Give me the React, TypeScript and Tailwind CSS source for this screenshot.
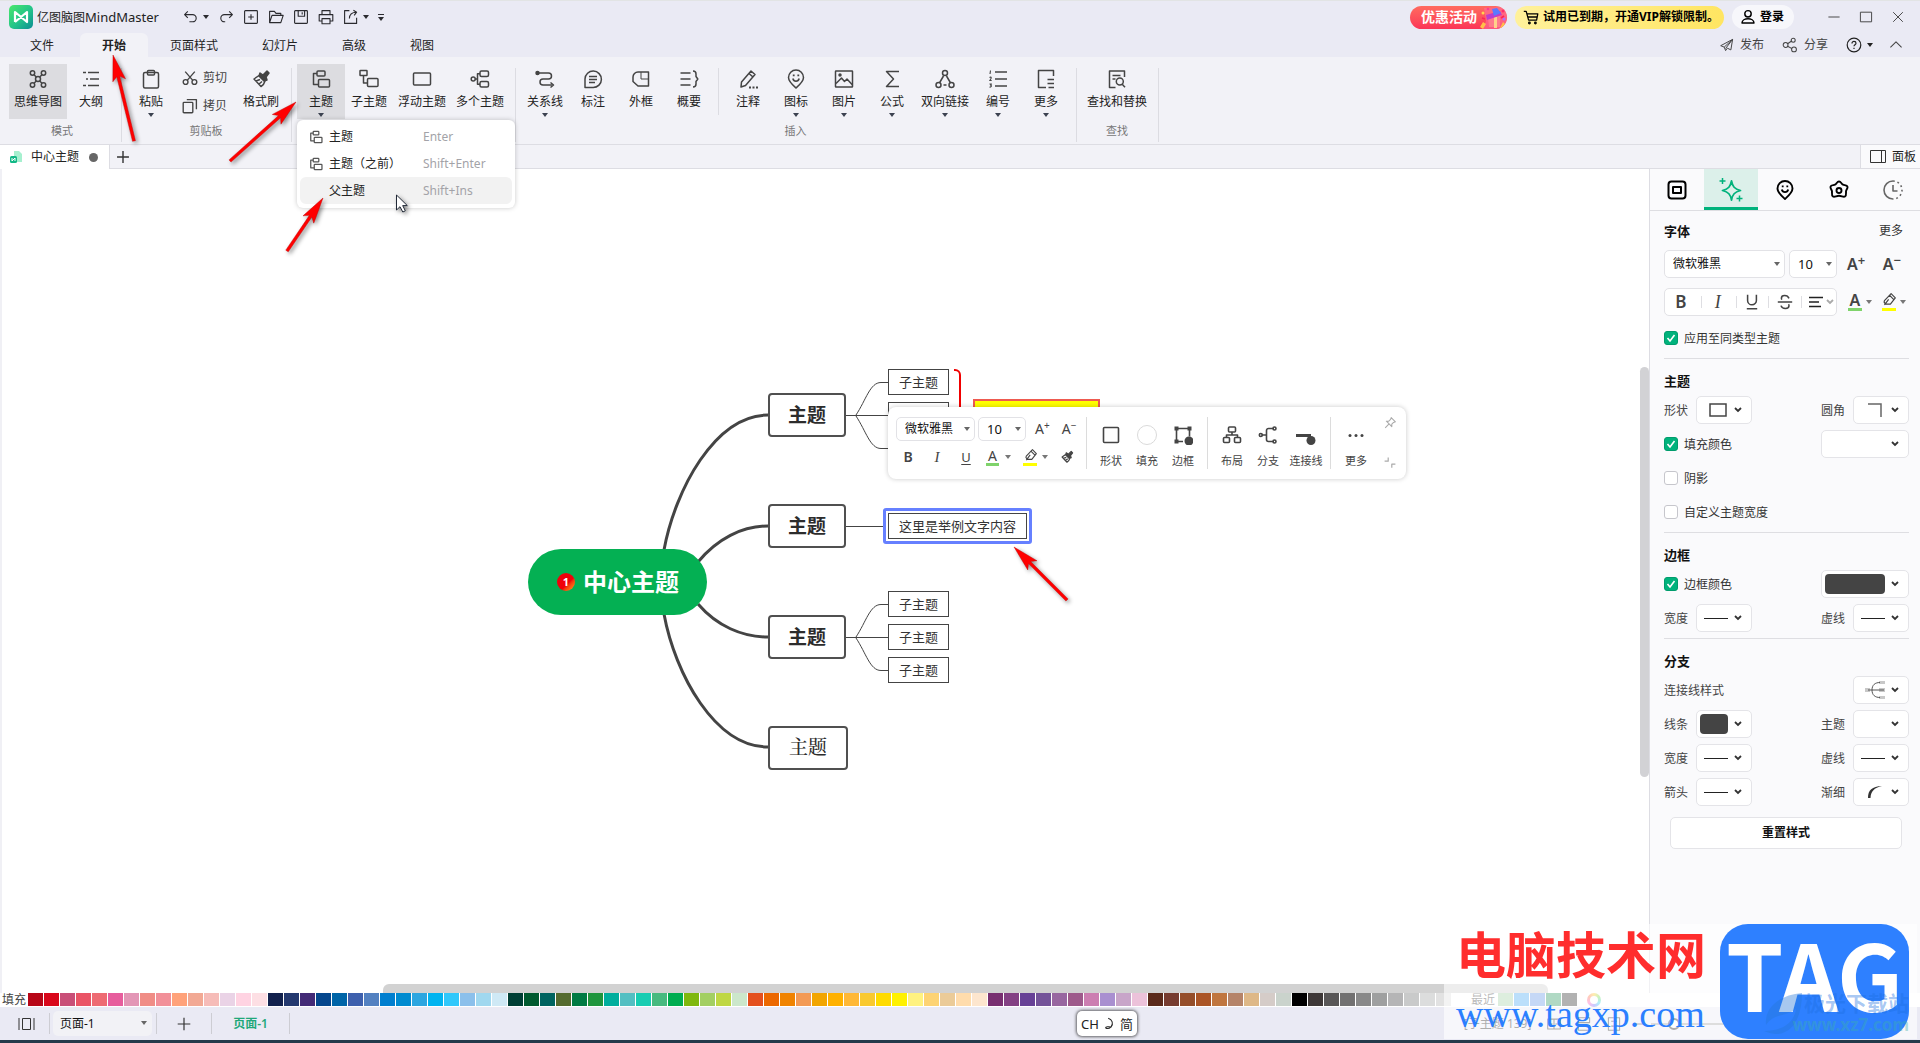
import React, { useState } from "react";
import type { ReactNode } from "react";

const SANS = "font-['Noto_Sans','Noto_Sans_CJK_SC',sans-serif]";

function Icon({ children, size = 20, width = 1.5, className = "" }: { children: ReactNode; size?: number; width?: number; className?: string }) {
  return (
    <svg
      width={size}
      height={size}
      viewBox="0 0 20 20"
      fill="none"
      stroke="currentColor"
      strokeWidth={width}
      strokeLinejoin="round"
      className={"shrink-0 " + className}
      aria-hidden="true"
    >
      {children}
    </svg>
  );
}

const Caret = ({ className = "" }: { className?: string }) => (
  <svg width="6" height="4" viewBox="0 0 6 4" className={"shrink-0 " + className} aria-hidden="true">
    <path d="M0 0h6L3 4z" fill="currentColor" />
  </svg>
);

const Chevron = ({ className = "" }: { className?: string }) => (
  <svg width="8" height="6" viewBox="0 0 8 6" fill="none" stroke="currentColor" strokeWidth="1.8" className={"shrink-0 " + className} aria-hidden="true">
    <path d="M1 1l3 3 3-3" />
  </svg>
);

/* ---------- icon drawings, all on a 20 × 20 grid ---------- */

const art = {
  mind: (
    <>
      <circle cx="10" cy="10" r="2.5" />
      <circle cx="4.5" cy="4" r="2.2" />
      <circle cx="15.5" cy="4" r="2.2" />
      <circle cx="4.5" cy="16" r="2.2" />
      <circle cx="15.5" cy="16" r="2.2" />
      <path d="M6 5.700l2.300 2.300M14 5.700l-2.300 2.300M6 14.300l2.300-2.300M14 14.300l-2.300-2.300" />
    </>
  ),
  outline: <path d="M2 3.500h3M7 3.500h11M5 10h2M9 10h9M2 16.500h3M7 16.500h11" />,
  paste: (
    <>
      <rect x="2.500" y="3.500" width="15" height="15.500" rx="1.500" />
      <rect x="6.500" y="1.500" width="7" height="4.500" rx="1" />
    </>
  ),
  cut: (
    <>
      <circle cx="4.500" cy="15" r="3" />
      <circle cx="15.500" cy="15" r="3" />
      <path d="M4 2l9.500 11M16 2L6.500 13" />
    </>
  ),
  copy: (
    <>
      <rect x="1.500" y="5.500" width="12" height="13" rx="1" />
      <path d="M6 2h12v12" />
    </>
  ),
  brush: (
    <>
      <path d="M9 4l3 2 4-4 2 2-3 4 1 3-3 1-5-5z" fill="currentColor" />
      <path d="M8 6.500L3 10l7 7.500c2.500-1.500 3.500-3.500 4-5.500M5 12l4-1.500M8 15l3-2.500" />
    </>
  ),
  topic: (
    <>
      <rect x="6" y="2" width="8" height="5" rx="1" />
      <rect x="7.500" y="10.500" width="11" height="7.500" rx="1" />
      <path d="M6 4.500H2.500v11h5" />
    </>
  ),
  subtopic: (
    <>
      <rect x="1" y="1.500" width="7" height="5" rx="0.500" />
      <rect x="8.500" y="9.500" width="10.500" height="8" rx="1" />
      <path d="M4.500 6.500v7.500h4" />
    </>
  ),
  floating: <rect x="1.500" y="4" width="17" height="12" rx="1" />,
  multi: (
    <>
      <circle cx="3.200" cy="10" r="2" />
      <rect x="10" y="2" width="8.500" height="5.500" rx="1.500" />
      <rect x="10" y="12.500" width="8.500" height="5.500" rx="1.500" />
      <path d="M10 4.700H7.500v10.600H10M5.200 10h2.300" />
    </>
  ),
  relation: (
    <>
      <path d="M2 4h11.500a3 3 0 010 6H8a2.500 2.500 0 000 6h9" />
      <circle cx="2.500" cy="4" r="1.500" fill="currentColor" />
      <path d="M15.500 13.500L18.500 16l-3 2.500" />
    </>
  ),
  callout: (
    <>
      <path d="M2 18.500V10a8.200 8.200 0 118.200 8.500z" />
      <path d="M6 7.500h8M6 10.500h8M6 13.500h6" />
    </>
  ),
  frame: (
    <>
      <path d="M7 3h10.500v14H7L2 12.500V8a5 5 0 015-5z" />
      <path d="M10 3v7h7.500" strokeWidth="1" />
    </>
  ),
  summary: <path d="M1.500 4h10M1.500 10h10M1.500 16h10M14 2c2.500 0 3 1 3 3v2.500l1.800 2.500-1.800 2.500V15c0 2-.5 3-3 3" />,
  note: (
    <>
      <path d="M13 2l4 3.500-9.500 11L3 18l.5-5zM11 4.500l4 3.500" />
      <path d="M11 18.500h2M14.500 18.500h2M18 18.500h2" strokeWidth="2" />
    </>
  ),
  mark: (
    <>
      <path d="M10 19c-4-3.500-7.500-6.500-7.500-10.500a7.500 7.500 0 0115 0C17.500 12.500 14 15.500 10 19z" />
      <path d="M6.800 9.500c1 3.500 5.400 3.500 6.400 0" />
      <path d="M7.700 5.500v1.700M12.300 5.500v1.700" strokeWidth="1.800" />
    </>
  ),
  image: (
    <>
      <rect x="1.500" y="2" width="17" height="16" rx="0.500" />
      <circle cx="6" cy="6" r="1" fill="currentColor" />
      <path d="M2 14.500L7.500 9l3 3.500 2.500-2.500 5.500 6" />
    </>
  ),
  sigma: <path d="M17 2.500H4.500l7 7.500-7 7.500H17" />,
  link: (
    <>
      <circle cx="10" cy="4" r="2.500" />
      <circle cx="3.500" cy="16" r="2.500" />
      <circle cx="16.500" cy="16" r="2.500" />
      <path d="M8.500 7l-3.800 6.500M11.500 7l3.800 6.500M8.500 16h3" />
    </>
  ),
  numbers: (
    <>
      <path d="M7 3h12M7 10h12M7 17h12" />
      <path d="M2.500 1.500L2 5M1.500 8.500c2-1.200 2.500.5.200 3h2M1.500 15h2l-1 1.200c1.800 0 .8 2.300-1 1.800" strokeWidth="1.100" />
    </>
  ),
  more: <path d="M17.500 7V1.500h-15v17H10M11.500 10.500h6.500M11.500 14.500h6.500M12.500 18.500h5.500" />,
  find: (
    <>
      <path d="M17.500 8V2h-15v16.500h6M5.500 6.500h8M5.500 10h3" />
      <circle cx="12.800" cy="12.500" r="3.500" />
      <path d="M15.200 15.200l2.800 3" />
    </>
  ),
};

/* ---------- ribbon ---------- */

type RibbonProps = { label: string; icon: ReactNode; caret?: boolean; active?: boolean; children?: ReactNode };

function RibbonButton({ label, icon, caret, active, children }: RibbonProps) {
  return (
    <div className="relative">
      <button
        type="button"
        className={"flex h-[55px] min-w-12 flex-col items-center px-[5px] pt-[5px] text-[#444] " + (active ? "bg-[#dcdce0]" : "hover:bg-[#e6e6ea]")}
      >
        <Icon>{icon}</Icon>
        <span className="mt-[5px] h-4 whitespace-nowrap leading-4 text-[#222]">{label}</span>
        {caret && <Caret className="mt-[3px] text-[#3c4250]" />}
      </button>
      {children}
    </div>
  );
}

function RibbonGroup({ label, children }: { label: string; children: ReactNode }) {
  return (
    <section aria-label={label} className="flex flex-col pt-[7px]">
      <div className="flex">{children}</div>
      <div className="mt-1 h-4 text-center text-[11px] leading-4 text-[#777]">{label}</div>
    </section>
  );
}

const RibbonLine = () => <div className="mr-[5px] ml-1.5 mt-[11px] mb-0.5 w-px bg-[#dcdce2]" />;

function TopicMenu() {
  const items = [
    { name: "主题", key: "Enter", icon: true },
    { name: "主题（之前）", key: "Shift+Enter", icon: true },
    { name: "父主题", key: "Shift+Ins", icon: false, hover: true },
  ];
  return (
    <ul role="menu" className="absolute top-14 left-0 z-20 w-[218px] rounded-md bg-white px-[3px] pt-[3px] pb-1 shadow-[0_0_5px_rgba(0,0,0,0.22)]">
      {items.map((it) => (
        <li key={it.name} role="none">
          <button role="menuitem" type="button" className={"flex h-[27px] w-full items-center gap-1.5 rounded-md pl-[9px] text-left " + (it.hover ? "bg-[#f2f2f2]" : "")}>
            <span className="w-3.5 text-[#555]">{it.icon && <Icon size={14} width={1.8}>{art.topic}</Icon>}</span>
            <span className="w-[88px] whitespace-nowrap text-[#222]">{it.name}</span>
            <span className="text-[#a3a3a8]">{it.key}</span>
          </button>
        </li>
      ))}
    </ul>
  );
}

function Ribbon() {
  return (
    <div className="flex h-[88px] border-b border-[#dddde3] bg-[#f2f2f7] pl-[9px]">
      <RibbonGroup label="模式">
        <RibbonButton label="思维导图" icon={art.mind} active />
        <RibbonButton label="大纲" icon={art.outline} />
      </RibbonGroup>
      <RibbonLine />
      <RibbonGroup label="剪贴板">
        <RibbonButton label="粘贴" icon={art.paste} caret />
        <div className="flex w-[62px] flex-col pl-[7px] text-[#444]">
          <button type="button" className="flex h-7 items-center gap-[5px]">
            <Icon size={16} width={1.7}>{art.cut}</Icon>剪切
          </button>
          <button type="button" className="flex h-[27px] items-center gap-[5px]">
            <Icon size={16} width={1.7}>{art.copy}</Icon>拷贝
          </button>
        </div>
        <RibbonButton label="格式刷" icon={art.brush} />
      </RibbonGroup>
      <RibbonLine />
      <RibbonGroup label="主题">
        <RibbonButton label="主题" icon={art.topic} caret active>
          <TopicMenu />
        </RibbonButton>
        <RibbonButton label="子主题" icon={art.subtopic} />
        <RibbonButton label="浮动主题" icon={art.floating} />
        <RibbonButton label="多个主题" icon={art.multi} />
      </RibbonGroup>
      <RibbonLine />
      <RibbonGroup label="插入">
        <RibbonButton label="关系线" icon={art.relation} caret />
        <RibbonButton label="标注" icon={art.callout} />
        <RibbonButton label="外框" icon={art.frame} />
        <RibbonButton label="概要" icon={art.summary} />
        <div className="mx-[5px] my-1 w-px bg-[#dcdce2]" />
        <RibbonButton label="注释" icon={art.note} />
        <RibbonButton label="图标" icon={art.mark} caret />
        <RibbonButton label="图片" icon={art.image} caret />
        <RibbonButton label="公式" icon={art.sigma} caret />
        <RibbonButton label="双向链接" icon={art.link} caret />
        <RibbonButton label="编号" icon={art.numbers} caret />
        <RibbonButton label="更多" icon={art.more} caret />
      </RibbonGroup>
      <RibbonLine />
      <RibbonGroup label="查找">
        <RibbonButton label="查找和替换" icon={art.find} />
      </RibbonGroup>
      <RibbonLine />
    </div>
  );
}

/* ---------- title bar and menu ---------- */

function Logo() {
  return (
    <svg width="24" height="24" viewBox="0 0 24 24" aria-hidden="true">
      <defs>
        <linearGradient id="logo" x1="0" y1="0" x2="1" y2="1">
          <stop offset="0" stopColor="#4be86a" />
          <stop offset="0.55" stopColor="#22c38a" />
          <stop offset="1" stopColor="#0b8d94" />
        </linearGradient>
      </defs>
      <rect width="24" height="24" rx="5" fill="url(#logo)" />
      <path d="M6 17V7l12 10V7L6 17" fill="none" stroke="#fff" strokeWidth="2.200" strokeLinejoin="round" />
    </svg>
  );
}

function QuickBtn({ label, children, caret }: { label: string; children: ReactNode; caret?: boolean }) {
  return (
    <button type="button" aria-label={label} className="flex items-center gap-1">
      <Icon size={16} width={1.4}>{children}</Icon>
      {caret && <Caret />}
    </button>
  );
}

function Gift() {
  return (
    <svg width="27" height="23" viewBox="0 0 27 23" aria-hidden="true">
      <path d="M4 2L22 1c3 1 5 5 5 10l-2 12H3l3-8z" fill="#ff6f9a" opacity="0.600" />
      <path d="M8 11l12-1v11H9z" fill="#ff7a8c" />
      <path d="M14 11h3v11h-3z" fill="#ffd08a" />
      <path d="M6 9l14-4 2 4-15 5z" fill="#c13cc9" />
      <path d="M12 3l5-1 4 5-7 3z" fill="#5b79ff" />
      <path d="M0 21l3-5 3 2-3 5zM20 22l3-6 3 3-2 4z" fill="#ffc04a" />
      <circle cx="3" cy="7" r="1.500" fill="#ffd34f" />
      <circle cx="8" cy="3" r="1.300" fill="#ff3d8f" />
      <circle cx="23" cy="5" r="1.500" fill="#ff2d6f" />
      <circle cx="24" cy="13" r="1.500" fill="#b26bff" />
      <path d="M2 12l3 1M21 12l3-2" stroke="#ff2257" strokeWidth="1.600" />
    </svg>
  );
}

function TitleBar() {
  return (
    <header className="flex h-[33px] items-center border-t border-[#e2e4e4] pl-[9px] text-[#2b2b2f]">
      <Logo />
      <h1 className="ml-1 w-[146px] text-[12px] text-[#222]">亿图脑图<span className="text-[13px]">MindMaster</span></h1>
      <nav aria-label="快速访问" className="flex items-center gap-[9px]">
        <QuickBtn label="撤销" caret><path d="M6 3L2 7l4 4M2 7h10a4.500 4.500 0 010 9H8" /></QuickBtn>
        <QuickBtn label="重做"><path d="M14 3l4 4-4 4M18 7H8a4.500 4.500 0 000 9h1" /></QuickBtn>
        <QuickBtn label="新建"><rect x="2" y="2" width="16" height="16" rx="1" /><path d="M10 6.500v7M6.500 10h7" /></QuickBtn>
        <QuickBtn label="打开"><path d="M2 17V3h6l2 2.500h6V8M2 17l3-9h14l-3 9z" /></QuickBtn>
        <QuickBtn label="保存"><rect x="2" y="2" width="16" height="16" rx="1" /><path d="M6.500 2v7h8V2M11.500 4v3" /></QuickBtn>
        <QuickBtn label="打印"><path d="M5 7V2h10v5M5 15H1.500V7h17v8H15" /><rect x="5" y="12" width="10" height="6.500" /></QuickBtn>
        <QuickBtn label="导出" caret><path d="M8 2H2v16h15v-7M8 12c0-5 3-8 9-8M13 1.500l4 2.500-3 4" /></QuickBtn>
        <button type="button" aria-label="自定义" className="flex flex-col items-center gap-0.5">
          <span className="h-px w-1.5 bg-[#2b2b2f]" />
          <Caret />
        </button>
      </nav>
      <div className="ml-auto flex items-center text-[12px] font-bold">
        <button type="button" className="flex h-[23px] w-[97px] items-center justify-between overflow-hidden rounded-full bg-linear-to-b from-[#ff6a5f] to-[#fb3357] pl-[11px] text-[14px] text-white">
          <span className="whitespace-nowrap">优惠活动</span>
          <Gift />
        </button>
        <button type="button" className="ml-2 flex h-[23px] w-[209px] items-center gap-1 rounded-full bg-linear-to-r from-[#fff19b] to-[#ffe561] pl-2 text-black">
          <Icon size={16} width={1.6}>
            <path d="M1 3h3l3 11h10l1.500-8H5M6 10h12" />
            <circle cx="8" cy="17.500" r="1" />
            <circle cx="15.500" cy="17.500" r="1" />
          </Icon>
          <span className="whitespace-nowrap">试用已到期，开通VIP解锁限制。</span>
        </button>
        <button type="button" className="ml-2 flex h-6 w-[62px] items-center gap-1 rounded-full bg-[#f7f7fb] pl-2 text-black">
          <Icon size={16} width={1.8}><circle cx="10" cy="6" r="4" /><path d="M2.500 17.500c0-7 15-7 15 0z" /></Icon>
          登录
        </button>
        <div className="ml-8 mr-3.5 flex items-center gap-4 text-[#444]">
          <button type="button" aria-label="最小化"><Icon size={16} width={1.200}><path d="M3 10h14" /></Icon></button>
          <button type="button" aria-label="最大化"><Icon size={16} width={1.200}><rect x="3" y="4" width="14" height="12" /></Icon></button>
          <button type="button" aria-label="关闭"><Icon size={16} width={1.200}><path d="M4 4l12 12M16 4L4 16" /></Icon></button>
        </div>
      </div>
    </header>
  );
}

function MenuBar() {
  const tabs = ["文件", "开始", "页面样式", "幻灯片", "高级", "视图"];
  return (
    <div className="flex h-6 items-center pl-2">
      <nav aria-label="菜单" className="flex h-6">
        {tabs.map((t) => (
          <button
            key={t}
            type="button"
            className={"h-6 px-[22px] pt-0.5 text-[#222] " + (t === "开始" ? "ml-1 rounded-t-md bg-[#f2f2f7] font-bold" : "")}
          >
            {t}
          </button>
        ))}
      </nav>
      <div className="mr-4 ml-auto flex items-center text-[#444]">
        <button type="button" className="flex items-center gap-1.5">
          <Icon size={14} width={1.400}><path d="M18 2L1 11l5 2 2 5 2.500-3.500 5 2.500zM6 13L18 2 8 15" /></Icon>发布
        </button>
        <button type="button" className="ml-[18px] flex items-center gap-1.5">
          <Icon size={16} width={1.300}>
            <circle cx="4.500" cy="10" r="3" /><circle cx="14" cy="4" r="2.500" /><circle cx="15" cy="15.500" r="3" /><path d="M7 8.500L12 5M7 11.500l5.500 3" />
          </Icon>分享
        </button>
        <button type="button" aria-label="帮助" className="ml-[18px] flex items-center gap-[5px] text-[#222]">
          <Icon size={16} width={1.500}>
            <circle cx="10" cy="10" r="8.500" /><path d="M7.500 8c0-3.500 5-3 5-.3 0 2-2.500 2-2.500 4M10 13.500v1.500" />
          </Icon>
          <Caret />
        </button>
        <button type="button" aria-label="收起" className="ml-[15px]"><Icon size={16} width={1.300}><path d="M3 13l7-7 7 7" /></Icon></button>
      </div>
    </div>
  );
}

function DocTabs() {
  return (
    <div className="flex h-6 items-stretch border-b border-[#dddde3] bg-[#f2f2f7]">
      <button type="button" className="-mb-px flex h-6 w-[110px] items-center border-r border-[#dddde3] bg-white pl-2.5 text-[#222]">
        <svg width="12" height="14" viewBox="0 0 12 14" aria-hidden="true">
          <path d="M4 1h5l3 3v8H4z" fill="#a6f0cf" />
          <rect x="0" y="6" width="7" height="7" rx="1.500" fill="#12b886" />
          <path d="M2 8v3l3-3v3" stroke="#fff" fill="none" />
        </svg>
        <span className="ml-[9px]">中心主题</span>
        <span className="ml-2.5 size-[9px] rounded-full bg-[#666]" />
      </button>
      <button type="button" aria-label="新建文档" className="ml-1.5 text-[#333]"><Icon size={14} width={2}><path d="M10 1.500v17M1.500 10h17" /></Icon></button>
      <button type="button" className="ml-auto flex w-[60px] items-center gap-1.5 border-l border-[#dddde3] bg-[#fafafc] pl-[9px] whitespace-nowrap text-[#222]">
        <svg width="16" height="13" viewBox="0 0 16 13" fill="none" stroke="#333" aria-hidden="true"><path d="M.5.5h15v12H.5zM11.500.5v12" /></svg>
        面板
      </button>
    </div>
  );
}

/* ---------- mind map canvas ---------- */

const subBox = "absolute left-[888px] flex h-[26px] w-[61px] items-center justify-center border border-[#444] bg-white text-[13px] text-[#333]";
const mainBox = "absolute left-[768px] flex h-11 items-center justify-center rounded-[4px] border-2 border-[#505050] bg-white text-[19px] text-[#2c2c2c]";

function Connectors() {
  return (
    <svg className="absolute inset-0 h-full w-full" fill="none" stroke="#444" aria-hidden="true">
      <g strokeWidth="3">
        <path d="M664 381C675 321 715 246 768 246" />
        <path d="M698 393C717 370 742 357 768 357" />
        <path d="M698 435C717 457 742 468 768 468" />
        <path d="M664 445C675 505 715 578 768 578" />
      </g>
      <g strokeWidth="1">
        <path d="M846 246.500h42M856 246C866 231 870 213.500 881 213.500h7M856 247C866 262 870 279.500 881 279.500h7" />
        <path d="M846 357.500h42" />
        <path d="M846 468.500h42M856 468C866 453 870 435.500 881 435.500h7M856 469C866 484 870 501.500 881 501.500h7" />
      </g>
    </svg>
  );
}

function MiniTool({ label, wide, children }: { label: string; wide?: boolean; children: ReactNode }) {
  return (
    <button type="button" className={"flex flex-col items-center text-[11px] text-[#444] " + (wide ? "w-10" : "w-9")}>
      <Icon className="mt-[18px]" width={1.600}>{children}</Icon>
      <span className="mt-2 h-4 leading-4 whitespace-nowrap">{label}</span>
    </button>
  );
}

const MiniLine = () => <div className="my-2.5 w-px bg-[#dcdcdc]" />;

function Highlighter({ size = 14 }: { size?: number }) {
  return (
    <Icon size={size} width={1.700}><path d="M13 1l6 6-7 9H5l-2-3 .5-2zM11 3.500l5.500 5.500M9.500 9l-6 8" /></Icon>
  );
}

function FontSelect({ small }: { small?: boolean }) {
  return (
    <div className={"relative " + (small ? "w-[79px]" : "w-[121px]")}>
      <select aria-label="字体" className={"w-full appearance-none rounded-[5px] border border-[#e2e2e6] bg-white pl-2 text-[12px] text-[#111] " + (small ? "h-6" : "h-7")}>
        <option>微软雅黑</option>
      </select>
      <Caret className="pointer-events-none absolute top-1/2 right-[5px] -mt-0.5 text-[#666]" />
    </div>
  );
}

function SizeSelect({ small }: { small?: boolean }) {
  return (
    <div className="relative w-12">
      <select aria-label="字号" className={"w-full appearance-none rounded-[5px] border border-[#e2e2e6] bg-white pl-2 text-[13px] text-[#111] " + (small ? "h-6" : "h-7")}>
        <option>10</option>
      </select>
      <Caret className="pointer-events-none absolute top-1/2 right-[5px] -mt-0.5 text-[#666]" />
    </div>
  );
}

function FontStep({ label, sign, small }: { label: string; sign: string; small?: boolean }) {
  return (
    <button type="button" aria-label={label} className={"flex items-start text-[#444] " + (small ? "text-[14px] leading-5" : "text-[16px] leading-5 font-semibold")}>
      <span>A</span>
      <span className={small ? "text-[10px] leading-3" : "text-[13px] leading-3"}>{sign}</span>
    </button>
  );
}

function FloatingToolbar() {
  return (
    <div role="toolbar" aria-label="浮动工具栏" className="absolute top-[238px] left-[888px] flex h-[72px] w-[518px] rounded-lg bg-white pl-2 text-[#444] shadow-[0_0_5px_rgba(0,0,0,0.22)]">
      <div className="flex w-[190px] flex-col pt-2.5">
        <div className="flex items-center gap-[3px]">
          <FontSelect small />
          <SizeSelect small />
          <div className="ml-1.5 flex gap-3">
            <FontStep label="增大字号" sign="+" small />
            <FontStep label="减小字号" sign="−" small />
          </div>
        </div>
        <div className="mt-1 flex h-6 items-center">
          <button type="button" aria-label="加粗" className="w-6 text-[14px] font-semibold">B</button>
          <button type="button" aria-label="斜体" className="ml-[5px] w-6 font-['Liberation_Serif',serif] text-[15px] italic">I</button>
          <button type="button" aria-label="下划线" className="ml-[5px] w-6 text-[13px] underline underline-offset-2">U</button>
          <button type="button" aria-label="字体颜色" className="ml-2 flex items-center gap-1.5">
            <span className="h-[17px] w-[13px] border-b-[3px] border-[#7fd36b] text-[14px] leading-[14px]">A</span><Caret className="text-[#777]" />
          </button>
          <button type="button" aria-label="高亮" className="ml-3 flex items-center gap-[5px]">
            <span className="flex h-[17px] w-[14px] flex-col items-center border-b-[3px] border-[#ffff00]"><Highlighter size={13} /></span><Caret className="text-[#777]" />
          </button>
          <button type="button" aria-label="格式刷" className="ml-3"><Icon size={14} width={1.700}>{art.brush}</Icon></button>
        </div>
      </div>
      <MiniLine />
      <div className="flex pr-1.5 pl-1.5">
        <MiniTool label="形状"><rect x="2.500" y="2.500" width="15" height="15" rx="1" /></MiniTool>
        <MiniTool label="填充"><circle cx="10" cy="10" r="9.500" stroke="#dadada" strokeWidth="1" /></MiniTool>
        <MiniTool label="边框">
          <path d="M3.500 3.500h13v8M3.500 3.500v13H10" />
          <g fill="currentColor" stroke="none"><path d="M1.500 1.500h4v4h-4zM14.500 1.500h4v4h-4zM1.500 14.500h4v4h-4z" /><circle cx="16" cy="16" r="4.500" /></g>
        </MiniTool>
      </div>
      <MiniLine />
      <div className="flex pr-1 pl-1.5">
        <MiniTool label="布局">
          <rect x="6.500" y="2" width="7" height="5" rx="1" /><rect x="1.500" y="12.500" width="6" height="5" rx="1" /><rect x="12.500" y="12.500" width="6" height="5" rx="1" /><path d="M10 7v3M4.500 12.500V10h11v2.500" />
        </MiniTool>
        <MiniTool label="分支">
          <path d="M3.500 10h5M16 3.500h-5.500a2 2 0 00-2 2v9a2 2 0 002 2H16" /><circle cx="2.800" cy="10" r="1.500" /><circle cx="16.500" cy="3.500" r="1.500" /><circle cx="16.500" cy="16.500" r="1.500" />
        </MiniTool>
        <MiniTool label="连接线" wide>
          <path d="M0 10.500h15" strokeWidth="3" /><circle cx="15" cy="15.500" r="4.500" fill="currentColor" stroke="none" />
        </MiniTool>
      </div>
      <MiniLine />
      <div className="pl-[7px]">
        <MiniTool label="更多"><g fill="currentColor" stroke="none"><circle cx="4" cy="10.500" r="1.500" /><circle cx="10" cy="10.500" r="1.500" /><circle cx="16" cy="10.500" r="1.500" /></g></MiniTool>
      </div>
      <div className="mr-2.5 ml-auto flex flex-col justify-between py-2.5 text-[#aaa]">
        <button type="button" aria-label="固定"><Icon size={12} width={1.800}><path d="M12 1l7 7-3 1-3 3v4L4 7h4l3-3zM8 12l-6 6" /></Icon></button>
        <button type="button" aria-label="收缩"><Icon size={12} width={2}><path d="M1 7h6V1M19 12h-6v6" /></Icon></button>
      </div>
    </div>
  );
}

function Canvas() {
  return (
    <main className="relative min-w-0 flex-1 overflow-hidden border-l-2 border-[#f0f0f5] bg-white">
      <div className="absolute inset-y-0 right-0 -left-0.5">
        <Connectors />
        <div className="absolute top-[380px] left-[528px] flex h-[66px] w-[179px] items-center rounded-full bg-[#04b053] pl-[29px] text-white">
          <span className="flex size-[18px] items-center justify-center rounded-full bg-linear-to-br from-[#f0000b] from-60% to-[#ff9a1f] text-[11px] font-bold">1</span>
          <span className="ml-2 text-[24px] font-bold whitespace-nowrap">中心主题</span>
        </div>
        <div className={mainBox + " top-[224px] w-[78px] font-bold"}>主题</div>
        <div className={mainBox + " top-[335px] w-[78px] font-bold"}>主题</div>
        <div className={mainBox + " top-[446px] w-[78px] font-bold"}>主题</div>
        <div className={mainBox + " top-[557px] w-20 font-['Liberation_Serif','Noto_Serif_CJK_SC','Noto_Sans_CJK_SC',serif] font-medium"}>主题</div>
        <div className={subBox + " top-[200px]"}>子主题</div>
        <div className={subBox + " top-[233px]"}>子主题</div>
        <div className={subBox + " top-[422px]"}>子主题</div>
        <div className={subBox + " top-[455px]"}>子主题</div>
        <div className={subBox + " top-[488px]"}>子主题</div>
        <div className="absolute top-[339px] left-[883px] rounded-[3px] border-3 border-[#6680ff] bg-white p-0.5">
          <div className="flex h-[26px] w-[139px] items-center justify-center border border-[#444] text-[13px] whitespace-nowrap text-[#333]">这里是举例文字内容</div>
        </div>
        <div className="absolute top-[200px] left-[954px] h-16 w-[7px] rounded-r-md border-2 border-l-0 border-[#f00000]" />
        <div className="absolute top-[230px] left-[973px] h-8 w-[127px] border-2 border-[#ee5a50] bg-[#ffff00]" />
        <FloatingToolbar />
      </div>
      <div className="absolute top-[198px] right-0 h-[410px] w-[9px] rounded-full bg-[#d2d2d5]" />
      <div className="absolute right-[101px] bottom-0 left-[381px] h-[9px] rounded-t-md bg-[#d2d2d2]" />
    </main>
  );
}

/* ---------- style panel ---------- */

const Label = ({ children }: { children: ReactNode }) => <span className="pt-px whitespace-nowrap text-[#444]">{children}</span>;

function Drop({ label, wide, children }: { label: string; wide?: boolean; children?: ReactNode }) {
  return (
    <button
      type="button"
      aria-label={label}
      aria-haspopup="listbox"
      className={"flex h-7 items-center justify-between rounded-[5px] border border-[#e4e4e8] bg-white pr-[9px] pl-[3px] text-[#333] " + (wide ? "w-[88px]" : "w-14")}
    >
      <span className={"flex h-5 items-center justify-center " + (wide ? "w-[60px]" : "w-7")}>{children}</span>
      <Chevron />
    </button>
  );
}

const Line = () => <span className="ml-1 h-px w-6 shrink-0 bg-[#222]" />;

function Check({ label, defaultChecked }: { label: string; defaultChecked?: boolean }) {
  const [on, setOn] = useState(!!defaultChecked);
  return (
    <label className="relative flex items-center gap-1.5 text-[#333]">
      <input
        type="checkbox"
        checked={on}
        onChange={(e) => setOn(e.target.checked)}
        className="size-3.5 appearance-none rounded-[3px] border border-[#c6c6cc] bg-white checked:border-[#009c6c] checked:bg-[#00b27c]"
      />
      {on && (
        <svg className="pointer-events-none absolute left-0" width="14" height="14" viewBox="0 0 14 14" fill="none" stroke="#fff" strokeWidth="1.600" aria-hidden="true">
          <path d="M3.500 7l2.500 3 4.500-6" />
        </svg>
      )}
      <span className="pt-px">{label}</span>
    </label>
  );
}

function Section({ title, action, first, last, children }: { title: string; action?: ReactNode; first?: boolean; last?: boolean; children: ReactNode }) {
  return (
    <section className={(first ? "pt-1.5 " : "pt-[9px] ") + (last ? "" : "border-b border-[#dedee2] pb-[3px]")}>
      <div className={"flex items-center justify-between pr-1.5 " + (first ? "h-7" : "h-[25px]")}>
        <h2 className="text-[13px] font-bold text-[#111]">{title}</h2>
        {action}
      </div>
      {children}
    </section>
  );
}

const Row = ({ children }: { children: ReactNode }) => <div className="flex h-[34px] items-center justify-between">{children}</div>;

function Pair({ label, children, wide }: { label: string; children?: ReactNode; wide?: boolean }) {
  return (
    <div className="flex items-center gap-2">
      <Label>{label}</Label>
      <Drop label={label} wide={wide}>{children}</Drop>
    </div>
  );
}

function PanelTabs() {
  const tabs: { name: string; icon: ReactNode }[] = [
    { name: "页面", icon: <Icon width={2}><rect x="1.500" y="1.500" width="17" height="17" rx="3" /><rect x="6" y="7" width="8" height="6" /></Icon> },
    {
      name: "样式",
      icon: (
        <svg width="24" height="24" viewBox="0 0 24 24" fill="none" stroke="currentColor" strokeWidth="1.800" strokeLinejoin="round" aria-hidden="true">
          <path d="M12.500 3c1 5.500 3 8 9 9.500-6 1.500-8 4-9 9.500-1-5.500-3-8-9-9.500 6-1.500 8-4 9-9.500z" />
          <path d="M3.500 0v6M.5 3h6M20.500 17.500v6M17.500 20.500h6" strokeWidth="1.500" />
        </svg>
      ),
    },
    { name: "图标", icon: <Icon width={1.900}>{art.mark}</Icon> },
    {
      name: "花样",
      icon: (
        <Icon width={1.900}>
          <path d="M10 1.500c2 0 2.500 2.500 4 3.200s4 .3 4.500 2-1.500 3-1.500 4.800.5 4-1 5-3.500-.8-6-.8-4.500 1.800-6 .8-1-3.500-1-5S1 8.500 1.500 6.700s3-1.300 4.500-2S8 1.500 10 1.500z" />
          <circle cx="10" cy="10.500" r="2.500" />
        </Icon>
      ),
    },
    {
      name: "历史",
      icon: (
        <Icon width={1.600} className="text-[#666]">
          <path d="M10 1a9 9 0 000 18" /><path d="M10 1a9 9 0 010 18" strokeDasharray="1.800 2.800" /><path d="M10 5v6h4.500" />
        </Icon>
      ),
    },
  ];
  return (
    <div role="tablist" className="flex h-[42px] border-b border-[#dedee2]">
      {tabs.map((t) => (
        <button
          key={t.name}
          type="button"
          role="tab"
          aria-label={t.name}
          aria-selected={t.name === "样式"}
          className={"flex flex-1 items-center justify-center border-b-3 pt-[3px] " + (t.name === "样式" ? "border-[#00b27c] bg-[#dcf0ea] text-[#00b27c]" : "border-transparent text-black")}
        >
          {t.icon}
        </button>
      ))}
    </div>
  );
}

const Sep = () => <span className="h-3 w-px bg-[#dedee2]" />;

function StylePanel() {
  return (
    <aside aria-label="样式面板" className="w-[271px] shrink-0 border-l border-[#dddde3] bg-[#fafafc]">
      <PanelTabs />
      <div className="pr-[11px] pl-3.5">
        <Section title="字体" first action={<button type="button" className="text-[#333]">更多</button>}>
          <div className="flex h-[38px] items-center gap-1">
            <FontSelect />
            <SizeSelect />
            <div className="flex flex-1 justify-between pr-2 pl-1.5">
              <FontStep label="增大字号" sign="+" />
              <FontStep label="减小字号" sign="−" />
            </div>
          </div>
          <div className="flex h-[38px] items-center text-[#444]">
            <div className="flex h-7 w-[173px] items-center rounded-[5px] border border-[#e2e2e6] bg-white">
              <button type="button" aria-label="加粗" className="flex-1 pr-1 text-[17px] font-semibold">B</button><Sep />
              <button type="button" aria-label="斜体" className="flex-1 pr-0.5 font-['Liberation_Serif',serif] text-[18px] italic">I</button><Sep />
              <button type="button" aria-label="下划线" className="flex flex-1 justify-center"><Icon size={16} width={1.900}><path d="M4.500 1v7a5.500 5.500 0 0011 0V1M3.500 18.500h13" /></Icon></button><Sep />
              <button type="button" aria-label="删除线" className="flex flex-1 justify-center"><Icon size={16} width={1.900}><path d="M15 5.500C13 .5 5.500 1 5.500 5.200c0 .8.2 1.300.6 1.800M1 10h18M5 14.500c1.500 5 10 4.500 10 .3 0-.8-.2-1.400-.6-1.900" /></Icon></button><Sep />
              <button type="button" aria-label="对齐" className="flex flex-1 items-center justify-end gap-0.5 pr-0.5">
                <svg width="15" height="12" viewBox="0 0 15 12" stroke="#222" strokeWidth="1.500" aria-hidden="true"><path d="M0 1.500h14M0 6h10M0 10.500h12" /></svg>
                <Chevron className="text-[#aaa]" />
              </button>
            </div>
            <button type="button" aria-label="字体颜色" className="ml-[11px] flex items-center gap-1">
              <span className="h-[18px] w-3.5 border-b-[3px] border-[#7fd36b] text-[16px] leading-[15px] font-semibold">A</span><Caret className="text-[#777]" />
            </button>
            <button type="button" aria-label="高亮" className="ml-2.5 flex items-center gap-1">
              <span className="flex h-[18px] w-3.5 flex-col items-center border-b-[3px] border-[#ffff00]"><Highlighter /></span><Caret className="text-[#777]" />
            </button>
          </div>
          <Row><Check label="应用至同类型主题" defaultChecked /></Row>
        </Section>
        <Section title="主题">
          <Row>
            <Pair label="形状"><svg width="18" height="14" viewBox="0 0 18 14" className="ml-2 shrink-0" aria-hidden="true"><rect x="1" y="1" width="16" height="12" fill="none" stroke="#444" strokeWidth="1.500" /></svg></Pair>
            <Pair label="圆角"><svg width="14" height="14" viewBox="0 0 14 14" className="ml-2 shrink-0" aria-hidden="true"><path d="M0 1h13v13" fill="none" stroke="#666" strokeWidth="1.500" /></svg></Pair>
          </Row>
          <Row><Check label="填充颜色" defaultChecked /><Drop label="填充颜色" wide /></Row>
          <Row><Check label="阴影" /></Row>
          <Row><Check label="自定义主题宽度" /></Row>
        </Section>
        <Section title="边框">
          <Row><Check label="边框颜色" defaultChecked /><Drop label="边框颜色" wide><span className="h-5 w-full rounded bg-[#444]" /></Drop></Row>
          <Row><Pair label="宽度"><Line /></Pair><Pair label="虚线"><Line /></Pair></Row>
        </Section>
        <Section title="分支" last>
          <Row>
            <Label>连接线样式</Label>
            <Drop label="连接线样式">
              <svg width="20" height="18" viewBox="0 0 20 18" className="ml-2 shrink-0" fill="none" aria-hidden="true">
                <path d="M0 7h5v4H0zM14 0h6v3h-6zM14 7h6v4h-6zM14 15h6v3h-6z" fill="#c8c8c8" />
                <path d="M3 9h16M7 9c0-5 3-7.500 8-7.500M7 9c0 5 3 7.500 8 7.500" stroke="#555" />
              </svg>
            </Drop>
          </Row>
          <Row><Pair label="线条"><span className="h-5 w-7 rounded bg-[#444]" /></Pair><Pair label="主题" /></Row>
          <Row><Pair label="宽度"><Line /></Pair><Pair label="虚线"><Line /></Pair></Row>
          <Row>
            <Pair label="箭头"><Line /></Pair>
            <Pair label="渐细"><svg width="14" height="13" viewBox="0 0 14 13" className="ml-2 shrink-0" aria-hidden="true"><path d="M0 12C0 4 4 .5 14 0 6 2 3 5 2.500 12z" fill="#333" /></svg></Pair>
          </Row>
        </Section>
        <button type="button" className="mx-1.5 mt-2 h-8 w-[232px] rounded-[5px] border border-[#e4e4e8] bg-white text-[12px] font-semibold text-[#111]">重置样式</button>
      </div>
    </aside>
  );
}

/* ---------- colour strip and status bar ---------- */

const palette =
  "b70617 d9071b c94f78 ea5466 ee6b73 e75d9d e396b6 f08d86 f29099 ffa27a f2a994 f6bcb8 ead3e6 ffd3e2 fddfe4 12214d 24396f 432a76 05478d 0065a8 3e60ad 5381c1 007fcf 008bd0 2ca6e0 00b4f0 30c8fb 8bc0eb a0d8ef cfe9f5 003f34 005a2f 006460 556b2f 007b43 1f953d 00ae9d 53bfc2 18cdb2 47ba7f 00ad50 7fb80e a3cf62 bfd743 cce7cb e4501e ec6800 f08300 f39a54 f2a500 ffb100 ffb836 f9c92f ffdb00 fff100 fff280 fdd373 ebcb98 ffdcac fde6ce 782f70 834083 674196 745399 9867a0 9e5a8b cc7eb1 a98fd0 c8a5c9 ecc2da 5b2a1b 773c30 954e2a ab5526 c0763f b58469 deb887 d5ccc8 cad3cc 000000 3e3837 595757 727171 898989 9fa0a0 b5b5b6 c9caca dcdddd e2e2e2 ffffff".split(
    " ",
  );
const recent = ["aad4ac", "55b0f5", "6f9ee8", "3aa06c", "404040"];

const Swatch = ({ color }: { color: string }) => (
  <button type="button" aria-label={"#" + color} className="h-[13px] w-[15px] shrink-0" style={{ background: "#" + color }} />
);

function ColorStrip() {
  return (
    <div className="flex h-3.5 items-start bg-white">
      <span className="w-7 pl-0.5 text-[12px] leading-[14px] text-[#444]">填充</span>
      <div className="flex gap-px">{palette.map((c) => <Swatch key={c} color={c} />)}</div>
      <span className="ml-1 w-[27px] text-[12px] leading-[14px] text-[#555]">最近</span>
      <div className="flex gap-px">{recent.map((c) => <Swatch key={c} color={c} />)}</div>
      <button type="button" aria-label="更多颜色" className="ml-2.5 size-3.5 rounded-full bg-[conic-gradient(#ffd23c,#7be05a,#41d6f0,#7d78ff,#ff66c0,#ff7a5c,#ffd23c)] p-[3px]">
        <span className="block size-2 rounded-full bg-white" />
      </button>
    </div>
  );
}

const BarLine = () => <span className="h-[21px] w-px bg-[#cdcdd3]" />;

function StatusBar() {
  return (
    <footer className="flex h-[33px] items-center bg-[#eaeaf4] text-[#333]">
      <button type="button" aria-label="页面列表" className="ml-[18px] w-[18px]">
        <svg width="17" height="12" viewBox="0 0 17 12" fill="none" stroke="#333" aria-hidden="true"><path d="M1 0v12M16 0v12M4.500.500h8v11h-8z" /></svg>
      </button>
      <span className="ml-[13px] flex"><BarLine /></span>
      <div className="relative ml-[3px]">
        <select aria-label="页面" className="h-[25px] w-[99px] appearance-none rounded-[5px] bg-[#f2f2f6] pl-[7px] text-[12px] text-[#111]">
          <option>页面-1</option>
        </select>
        <Caret className="pointer-events-none absolute top-2.5 right-[5px] text-[#666]" />
      </div>
      <span className="ml-1 flex"><BarLine /></span>
      <button type="button" aria-label="添加页面" className="w-[54px]"><Icon size={14} width={1.700} className="mx-auto"><path d="M10 1v18M1 10h18" /></Icon></button>
      <BarLine />
      <button type="button" className="w-[77px] text-[12px] font-semibold text-[#1fa87a]">页面-1</button>
      <BarLine />
      <div className="ml-auto flex items-center pr-[33px]">
        <div className="flex items-center gap-4">
          <span className="whitespace-nowrap">[子主题 139]</span>
          <Icon size={14}><path d="M10 3H1v14h9zM10 3h9v14h-9M4 10h4M12 10h4" /></Icon>
          <Icon size={14}><path d="M2 1h16v7H2zM2 12h16v7H2z" /></Icon>
          <Icon size={14}><path d="M2 1h16v18H2zM6 6h8M6 13h8" /></Icon>
        </div>
        <div className="ml-3.5 flex items-center gap-2">
          <Icon size={8} width={2.500}><path d="M0 10h20" /></Icon>
          <input
            type="range"
            aria-label="缩放"
            defaultValue="20"
            className="h-0.5 w-[95px] appearance-none bg-[#aaa] [&::-webkit-slider-thumb]:size-3 [&::-webkit-slider-thumb]:appearance-none [&::-webkit-slider-thumb]:rounded-full [&::-webkit-slider-thumb]:border-2 [&::-webkit-slider-thumb]:border-[#333] [&::-webkit-slider-thumb]:bg-white"
          />
          <Icon size={12} width={1.800}><path d="M10 1v18M1 10h18" /></Icon>
          <button type="button" className="flex items-center gap-1">100%<Caret /></button>
        </div>
        <Icon size={16} className="ml-5"><path d="M2 6V2h4M14 2h4v4M18 14v4h-4M6 18H2v-4" /></Icon>
        <Icon size={16} className="ml-5"><path d="M2 2h16v16H2zM5 10h10" /></Icon>
      </div>
    </footer>
  );
}

function InputMethod() {
  return (
    <div className="absolute bottom-[7px] left-[1077px] z-10 flex h-[25px] w-[60px] items-center justify-center gap-1 rounded-[5px] bg-white text-[13px] text-[#222] shadow-[0_0_3px_1px_rgba(40,40,40,0.7)]">
      CH
      <Icon size={13} width={1.600}><path d="M8 2c6 2 9 8 4 14M12 15.500c-3 3-8 2.500-8 1s5-2 8-1" /></Icon>
      简
    </div>
  );
}

/* ---------- overlays ---------- */

function Arrow({ tip, tail }: { tip: [number, number]; tail: [number, number] }) {
  const dx = tail[0] - tip[0];
  const dy = tail[1] - tip[1];
  const len = Math.hypot(dx, dy);
  const angle = (Math.atan2(dy, dx) * 180) / Math.PI;
  return (
    <g transform={`translate(${tip[0]} ${tip[1]}) rotate(${angle})`}>
      <path d={`M0 0L26-6.500 22-1.500H${len}v3H22L26 6.500z`} fill="#ff0000" stroke="#c00000" strokeWidth="0.400" />
    </g>
  );
}

function Annotations() {
  return (
    <svg className="pointer-events-none absolute inset-0 z-30 h-full w-full drop-shadow-[2px_2px_2px_rgba(0,0,0,0.45)]" aria-hidden="true">
      <Arrow tip={[113, 55]} tail={[134, 141]} />
      <Arrow tip={[296, 102]} tail={[230, 161]} />
      <Arrow tip={[323, 198]} tail={[287, 251]} />
      <Arrow tip={[1014, 547]} tail={[1067, 600]} />
      <path d="M396.500 195v15l3.500-3.300 2.800 5.300 2.500-1.200-2.600-5.200h4.600z" fill="#fff" stroke="#222a38" />
    </svg>
  );
}

function Watermark() {
  return (
    <div className="absolute right-[3px] bottom-1 z-30 flex h-[115px] w-[473px] bg-white/60">
      <div className="flex w-[276px] flex-col pl-3">
        <span className="mt-1 h-[55px] text-[50px] leading-[55px] font-bold whitespace-nowrap text-[#ff2d2d]">电脑技术网</span>
        <span className="mt-[11px] h-10 font-['Liberation_Serif',serif] text-[38px] leading-10 whitespace-nowrap text-[#2b7fff]">www.tagxp.com</span>
      </div>
      <div className="relative mr-2 flex h-[115px] flex-1 items-start justify-center rounded-[28px] bg-[#2e80ff]">
        <span className="font-['Noto_Sans_CJK_SC',sans-serif] text-[92px] leading-[96px] font-bold text-white">TAG</span>
        <svg className="absolute bottom-1 left-10 opacity-40" width="44" height="44" viewBox="0 0 44 44" aria-hidden="true">
          <path d="M42 2C20 4 4 16 6 34c8-12 20-8 30-16C34 32 22 40 4 40 26 50 42 34 42 2z" fill="#2577d8" />
        </svg>
        <div className="absolute right-0 bottom-1 flex flex-col text-right whitespace-nowrap">
          <span className="text-[21px] leading-6 font-bold text-[#1d6fe0]/40">极光下载站</span>
          <span className="text-[17px] leading-5 font-bold text-[#3ab0a8]/40">www.xz7.com</span>
        </div>
      </div>
    </div>
  );
}

export default function App() {
  return (
    <div className={SANS + " relative flex h-screen flex-col overflow-hidden bg-[#eaeaf4] text-[12px] leading-4 [&_button]:cursor-default"}>
      <TitleBar />
      <MenuBar />
      <Ribbon />
      <DocTabs />
      <div className="flex min-h-0 flex-1">
        <Canvas />
        <StylePanel />
      </div>
      <ColorStrip />
      <StatusBar />
      <div className="h-[3px] shrink-0 bg-[#24394a]" />
      <InputMethod />
      <Annotations />
      <Watermark />
    </div>
  );
}
